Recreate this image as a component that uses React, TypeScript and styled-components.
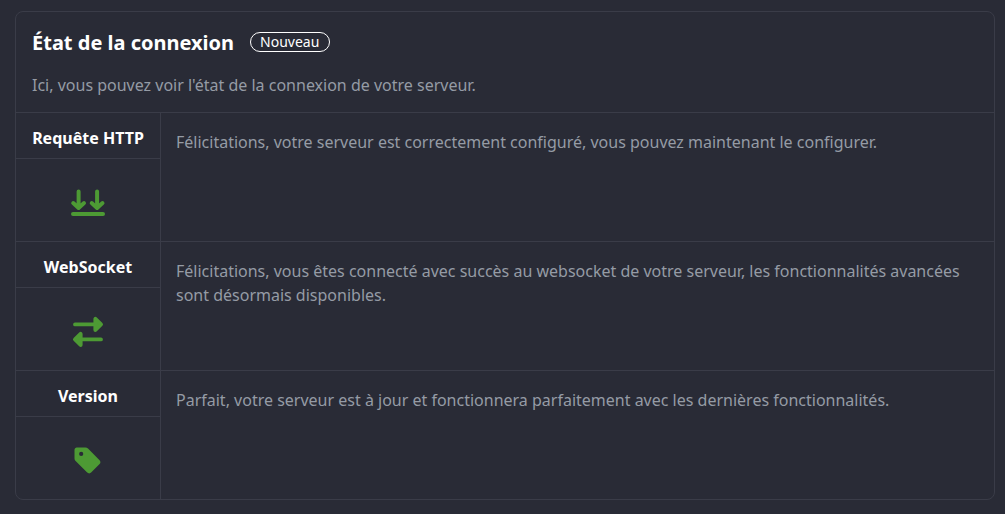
import React from "react";
import styled, { createGlobalStyle } from "styled-components";

const GlobalStyle = createGlobalStyle`
  * { box-sizing: border-box; }
  body {
    margin: 0;
    background: #292b36;
    color: #ffffff;
    font-family: "Noto Sans", sans-serif;
    font-size: 16px;
    line-height: 24px;
  }
`;

const Page = styled.main`
  padding: 11px 10px 14px 15px;
`;

const Card = styled.section`
  border: 1px solid #3a3c48;
  border-radius: 8px;
  overflow: hidden;
`;

const CardHeader = styled.header`
  padding: 16px 16px 15px;
`;

const TitleRow = styled.div`
  display: flex;
  align-items: flex-start;
  gap: 16px;
`;

const Title = styled.h1`
  margin: 0;
  font-size: 20px;
  line-height: 30px;
  font-weight: 700;
`;

const Badge = styled.span`
  margin-top: 4px;
  padding: 0 10px 0 9px;
  border: 1px solid #ffffff;
  border-radius: 10px;
  font-size: 14px;
  line-height: 18px;
`;

const Intro = styled.p`
  margin: 15px 0 0;
  color: #959ba5;
`;

const Row = styled.article`
  display: flex;
  min-height: 129px;
  border-top: 1px solid #3a3c48;
`;

const RowSide = styled.div`
  display: flex;
  flex-direction: column;
  flex: 0 0 145px;
  border-right: 1px solid #3a3c48;
`;

const RowTitle = styled.h2`
  margin: 0;
  padding: 13px 0 8px;
  border-bottom: 1px solid #3a3c48;
  font-size: 16px;
  line-height: 24px;
  font-weight: 700;
  text-align: center;
`;

const IconBox = styled.div`
  display: flex;
  flex: 1;
  align-items: center;
  justify-content: center;
  padding-top: 6px;
  color: #4d9a34;
`;

const Message = styled.p`
  flex: 1;
  margin: 0;
  padding: 17px 15px;
  color: #959ba5;
`;

const DownloadIcon = () => (
  <svg width="36" height="32" viewBox="0 0 36 32" fill="none" stroke="currentColor" strokeWidth="4" strokeLinecap="round" strokeLinejoin="round" aria-hidden="true">
    <path d="M8.6 4.5v16M3.2 16l5.4 5 5.4-5M27.1 4.5v16M21.7 16l5.4 5 5.4-5M3 27h30" />
  </svg>
);

const ExchangeIcon = () => (
  <svg width="32" height="32" viewBox="0 0 32 32" fill="currentColor" stroke="currentColor" strokeLinecap="round" strokeLinejoin="round" aria-hidden="true">
    <path d="M3 8.4h20M29 23.4H9" strokeWidth="3.8" />
    <path d="M23.4 2.9v11l5.6-5.5zM8.6 17.9v11l-5.6-5.5z" strokeWidth="4" />
  </svg>
);

const TagIcon = () => (
  <svg width="32" height="32" viewBox="0 0 32 32" fill="currentColor" fillRule="evenodd" aria-hidden="true">
    <path d="M4.8 2.5h8.6c1 0 1.9.4 2.6 1.1l11.6 11.6c1.1 1.1 1.1 2.8 0 3.9l-8.5 8.5c-1.1 1.1-2.8 1.1-3.9 0L3.6 16c-.7-.7-1.1-1.6-1.1-2.6V4.8c0-1.3 1-2.3 2.3-2.3zM9.2 6.8a2.1 2.1 0 1 0 0 4.2 2.1 2.1 0 0 0 0-4.2z" />
  </svg>
);

const rows = [
  { title: "Requête HTTP", icon: <DownloadIcon />, text: "Félicitations, votre serveur est correctement configuré, vous pouvez maintenant le configurer." },
  { title: "WebSocket", icon: <ExchangeIcon />, text: "Félicitations, vous êtes connecté avec succès au websocket de votre serveur, les fonctionnalités avancées sont désormais disponibles." },
  { title: "Version", icon: <TagIcon />, text: "Parfait, votre serveur est à jour et fonctionnera parfaitement avec les dernières fonctionnalités." },
];

export default function App() {
  return (
    <>
      <GlobalStyle />
      <Page>
        <Card>
          <CardHeader>
            <TitleRow>
              <Title>État de la connexion</Title>
              <Badge>Nouveau</Badge>
            </TitleRow>
            <Intro>Ici, vous pouvez voir l'état de la connexion de votre serveur.</Intro>
          </CardHeader>
          {rows.map((row) => (
            <Row key={row.title}>
              <RowSide>
                <RowTitle>{row.title}</RowTitle>
                <IconBox>{row.icon}</IconBox>
              </RowSide>
              <Message>{row.text}</Message>
            </Row>
          ))}
        </Card>
      </Page>
    </>
  );
}
